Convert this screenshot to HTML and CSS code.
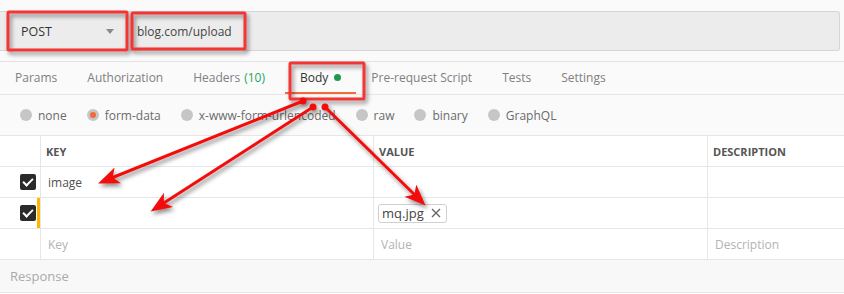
FILE: index.html
```html
<!DOCTYPE html>
<html lang="en">
<head>
  <meta charset="UTF-8">
  <title>Request - form-data upload</title>
  <link rel="stylesheet" href="styles.css">
</head>
<body>
  <div class="page">
    <!-- Request line -->
    <div class="topbar">
      <div class="request">
        <div class="method">
          <span>POST</span>
          <span class="caret"></span>
        </div>
        <div class="url">blog.com/upload</div>
      </div>
    </div>

    <!-- Request tabs -->
    <nav class="tabs">
      <div class="tab">Params</div>
      <div class="tab">Authorization</div>
      <div class="tab">Headers <span class="count">(10)</span></div>
      <div class="tab active">Body <span class="dot"></span></div>
      <div class="tab">Pre-request Script</div>
      <div class="tab">Tests</div>
      <div class="tab">Settings</div>
    </nav>

    <!-- Body type -->
    <div class="types">
      <label class="type"><span class="radio"></span>none</label>
      <label class="type"><span class="radio checked"></span>form-data</label>
      <label class="type"><span class="radio"></span>x-www-form-urlencoded</label>
      <label class="type"><span class="radio"></span>raw</label>
      <label class="type"><span class="radio"></span>binary</label>
      <label class="type"><span class="radio"></span>GraphQL</label>
    </div>

    <!-- Form data table -->
    <div class="params">
      <div class="cell"></div>
      <div class="cell head">KEY</div>
      <div class="cell head">VALUE</div>
      <div class="cell head">DESCRIPTION</div>

      <div class="cell check"><span class="box"></span></div>
      <div class="cell text">image</div>
      <div class="cell"></div>
      <div class="cell"></div>

      <div class="cell check editing"><span class="box"></span></div>
      <div class="cell"></div>
      <div class="cell file">
        <span class="chip">mq.jpg
          <svg class="close" width="10" height="10" viewBox="0 0 10 10">
            <path d="M1,1 L9,9 M9,1 L1,9" stroke="#666" stroke-width="1.4" fill="none"/>
          </svg>
        </span>
      </div>
      <div class="cell"></div>

      <div class="cell"></div>
      <div class="cell placeholder">Key</div>
      <div class="cell placeholder">Value</div>
      <div class="cell placeholder">Description</div>
    </div>

    <div class="response">Response</div>

    <!-- Annotations drawn over the screenshot -->
    <svg class="notes" width="844" height="294" viewBox="0 0 844 294">
      <defs>
        <filter id="shadow" x="-20%" y="-20%" width="140%" height="140%">
          <feDropShadow dx="2" dy="3" stdDeviation="2" flood-color="#000" flood-opacity="0.45"/>
        </filter>
        <marker id="head" viewBox="0 0 10 8" markerWidth="24" markerHeight="17" markerUnits="userSpaceOnUse" refX="7" refY="4" orient="auto">
          <path d="M0,0 L10,4 L0,8 L2.6,4 Z" fill="#f20d0d"/>
        </marker>
      </defs>
      <g fill="none" stroke="#f23535" stroke-width="3" filter="url(#shadow)">
        <rect x="8" y="12" width="119" height="38" rx="1"/>
        <rect x="132" y="13" width="113" height="36" rx="1"/>
        <rect x="290" y="63" width="74" height="36" rx="1"/>
      </g>
      <g stroke="#f20d0d" stroke-width="3" fill="#f20d0d" filter="url(#shadow)">
        <line x1="303" y1="101" x2="104" y2="181" marker-end="url(#head)"/>
        <line x1="313" y1="107" x2="156" y2="208" marker-end="url(#head)"/>
        <line x1="325" y1="107" x2="421" y2="201" marker-end="url(#head)"/>
        <circle cx="303" cy="101" r="3.5" stroke="none"/>
        <circle cx="313" cy="107" r="3.5" stroke="none"/>
        <circle cx="325" cy="107" r="3.5" stroke="none"/>
      </g>
    </svg>
  </div>
</body>
</html>
```

FILE: styles.css
```css
body {
  margin: 0;
  font-family: "Open Sans", "Noto Sans", sans-serif;
  font-size: 12px;
  color: #505050;
  background-color: #ffffff;
}

.page {
  position: relative;
  width: 844px;
  height: 294px;
  overflow: hidden;
}

.topbar {
  background-color: #fafafa;
  padding: 11px 4px 10px 0;
  border-top: 1px solid #ececec;
  border-bottom: 1px solid #e3e3e3;
  margin-top: -1px;
}

.request {
  display: flex;
  align-items: center;
  height: 38px;
  background-color: #ececec;
  border: 1px solid #d6d6d6;
  border-left: none;
  border-radius: 0 3px 3px 0;
  font-size: 12.5px;
  color: #333;
}

.method {
  display: flex;
  align-items: center;
  justify-content: space-between;
  width: 131px;
  box-sizing: border-box;
  padding: 0 17px 0 21px;
}

.caret {
  width: 0;
  height: 0;
  border-left: 4px solid transparent;
  border-right: 4px solid transparent;
  border-top: 5px solid #8a8a8a;
}

.url {
  padding-left: 6px;
  font-size: 12px;
  color: #444;
}

.tabs {
  display: flex;
  height: 32px;
  background-color: #fafafa;
  border-bottom: 1px solid #e6e6e6;
}

.tab {
  display: flex;
  align-items: center;
  padding: 0 15px;
  height: 30px;
  border-bottom: 2px solid transparent;
  color: #808080;
}

.tab.active {
  color: #333;
  border-bottom-color: #f26b3a;
  margin-left: 5px;
}

.count {
  margin-left: 4px;
  color: #26a65b;
}

.dot {
  width: 7px;
  height: 7px;
  margin-left: 6px;
  border-radius: 50%;
  background-color: #1d9a4b;
}

.types {
  display: flex;
  align-items: center;
  height: 40px;
  padding-left: 20px;
  background-color: #fafafa;
  color: #6b6b6b;
}

.type {
  display: flex;
  align-items: center;
  margin-right: 20px;
}

.radio {
  width: 12px;
  height: 12px;
  margin-right: 6px;
  border-radius: 50%;
  background-color: #c6c6c6;
  box-sizing: border-box;
}

.radio.checked {
  background-color: #f26b3a;
  border: 3px solid #c6c6c6;
}

.params {
  display: grid;
  grid-template-columns: 40px 333px 334px 1fr;
  border-top: 1px solid #e6e6e6;
}

.cell {
  display: flex;
  align-items: center;
  height: 30px;
  border-bottom: 1px solid #e6e6e6;
  padding-left: 7px;
}

.cell:not(:nth-child(4n+1)) {
  border-left: 1px solid #e6e6e6;
}

.head {
  padding-left: 5px;
  font-size: 11px;
  font-weight: bold;
  color: #555;
}

.text {
  color: #505050;
}

.check {
  padding-left: 20px;
}

.check.editing {
  box-shadow: inset -3px 0 0 #ffb400;
}

.box {
  position: relative;
  width: 16px;
  height: 16px;
  border-radius: 2px;
  background-color: #2b2b2b;
}

.box::after {
  content: "";
  position: absolute;
  left: 5px;
  top: 2px;
  width: 4px;
  height: 8px;
  border-right: 2px solid #fff;
  border-bottom: 2px solid #fff;
  transform: rotate(45deg);
}

.file {
  padding-left: 4px;
}

.chip {
  display: flex;
  align-items: center;
  height: 17px;
  padding: 0 5px 0 3px;
  border: 1px solid #cfcfcf;
  border-radius: 3px;
  background-color: #fff;
  font-size: 13px;
  color: #444;
}

.close {
  margin-left: 7px;
}

.placeholder {
  color: #b3b3b3;
}

.response {
  display: flex;
  align-items: center;
  height: 32px;
  padding-left: 10px;
  background-color: #f8f8f8;
  border-bottom: 1px solid #e6e6e6;
  font-size: 13px;
  color: #aaa;
}

.notes {
  position: absolute;
  top: 0;
  left: 0;
  pointer-events: none;
}
```
